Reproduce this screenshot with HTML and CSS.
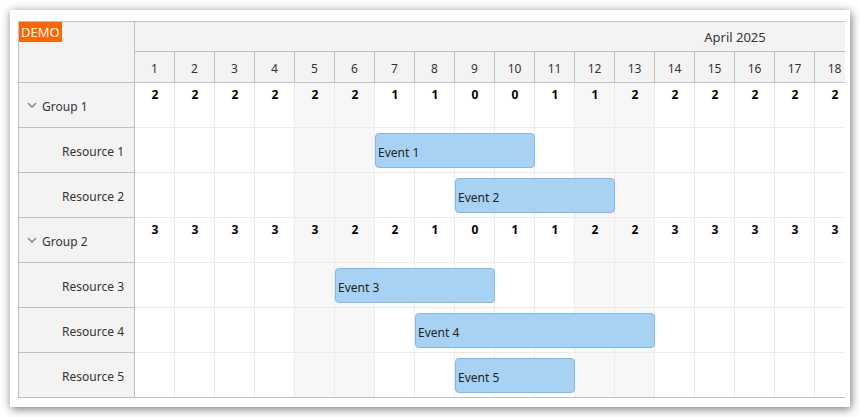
FILE: index.html
```html
<!DOCTYPE html>
<html>
<head>
<meta charset="utf-8">
<link rel="stylesheet" href="styles.css">
</head>
<body>
<div class="card">
  <div class="scheduler">
    <div class="rowheaders">
      <div class="corner"><span class="demo">DEMO</span></div>
      <div class="rh group"><svg class="chev" width="10" height="6" viewBox="0 0 10 6"><path d="M1 1 L5 5 L9 1" fill="none" stroke="#8a8a8a" stroke-width="1.6"/></svg><span>Group 1</span></div>
      <div class="rh res">Resource 1</div>
      <div class="rh res">Resource 2</div>
      <div class="rh group"><svg class="chev" width="10" height="6" viewBox="0 0 10 6"><path d="M1 1 L5 5 L9 1" fill="none" stroke="#8a8a8a" stroke-width="1.6"/></svg><span>Group 2</span></div>
      <div class="rh res">Resource 3</div>
      <div class="rh res">Resource 4</div>
      <div class="rh res">Resource 5</div>
    </div>
    <div class="main">
      <div class="timeheader">
        <div class="month">April 2025</div>
        <div class="days">
          <div>1</div><div>2</div><div>3</div><div>4</div><div>5</div><div>6</div><div>7</div><div>8</div><div>9</div><div>10</div>
          <div>11</div><div>12</div><div>13</div><div>14</div><div>15</div><div>16</div><div>17</div><div>18</div><div>19</div><div>20</div>
          <div>21</div><div>22</div><div>23</div><div>24</div><div>25</div><div>26</div><div>27</div><div>28</div><div>29</div><div>30</div>
        </div>
      </div>
      <div class="rows">
        <div class="row grp">
          <span>2</span><span>2</span><span>2</span><span>2</span><span>2</span><span>2</span><span>1</span><span>1</span><span>0</span><span>0</span>
          <span>1</span><span>1</span><span>2</span><span>2</span><span>2</span><span>2</span><span>2</span><span>2</span><span>2</span><span>2</span>
          <span>2</span><span>2</span><span>2</span><span>2</span><span>2</span><span>2</span><span>2</span><span>2</span><span>2</span><span>2</span>
        </div>
        <div class="row"><div class="event e1">Event 1</div></div>
        <div class="row"><div class="event e2">Event 2</div></div>
        <div class="row grp">
          <span>3</span><span>3</span><span>3</span><span>3</span><span>3</span><span>2</span><span>2</span><span>1</span><span>0</span><span>1</span>
          <span>1</span><span>2</span><span>2</span><span>3</span><span>3</span><span>3</span><span>3</span><span>3</span><span>3</span><span>3</span>
          <span>3</span><span>3</span><span>3</span><span>3</span><span>3</span><span>3</span><span>3</span><span>3</span><span>3</span><span>3</span>
        </div>
        <div class="row"><div class="event e3">Event 3</div></div>
        <div class="row"><div class="event e4">Event 4</div></div>
        <div class="row"><div class="event e5">Event 5</div></div>
      </div>
    </div>
  </div>
</div>
</body>
</html>
```
FILE: styles.css
```css
* { box-sizing: border-box; }
html, body { margin: 0; padding: 0; background: #fff; }
body {
  padding: 10px;
  font-family: "Noto Sans", "Open Sans", sans-serif;
  font-size: 12px;
  color: #333;
}
.card {
  width: 840px;
  height: 397px;
  padding: 11px 5px 9px 8px;
  background: #fff;
  box-shadow: 1px 2px 9px rgba(0,0,0,0.55);
}
.scheduler {
  display: flex;
  width: 827px;
  border: 1px solid #c0c0c0;
  border-right: none;
  overflow: hidden;
}
.rowheaders {
  flex: 0 0 116px;
  width: 116px;
  background: #f3f3f3;
  border-right: 1px solid #c0c0c0;
  display: flex;
  flex-direction: column;
}
.corner {
  height: 61px;
  border-bottom: 1px solid #c0c0c0;
  position: relative;
}
.demo {
  position: absolute;
  left: 0;
  top: 0;
  background: #ff6600;
  color: #fff;
  font-size: 13px;
  line-height: 20px;
  padding: 0 2px;
}
.rh {
  height: 45px;
  border-bottom: 1px solid #c0c0c0;
  display: flex;
  align-items: center;
}
.rh:last-child { border-bottom: none; height: 44px; }
.rh.group { padding-left: 8px; gap: 5px; }
.rh.group span { padding-top: 2px; }
.chev { display: block; }
.rh.res { justify-content: flex-end; padding-right: 10px; padding-top: 2px; }
.main {
  flex: 1;
  min-width: 0;
  overflow: hidden;
}
.timeheader { width: 1200px; background: #f3f3f3; }
.month {
  height: 30px;
  border-bottom: 1px solid #c0c0c0;
  display: flex;
  align-items: center;
  justify-content: center;
  font-size: 13px;
  padding-top: 1px;
}
.days {
  display: grid;
  grid-template-columns: repeat(30, 40px);
  height: 31px;
  border-bottom: 1px solid #c0c0c0;
}
.days div {
  border-right: 1px solid #c0c0c0;
  display: flex;
  align-items: center;
  justify-content: center;
  padding-top: 2px;
}
.rows {
  width: 1200px;
  background-image:
    repeating-linear-gradient(90deg, transparent 0 39px, #ebebeb 39px 40px),
    repeating-linear-gradient(90deg, transparent 0 160px, #f7f7f7 160px 240px, transparent 240px 280px);
}
.row {
  height: 45px;
  border-bottom: 1px solid #ebebeb;
  display: grid;
  grid-template-columns: repeat(30, 40px);
  grid-template-rows: 44px;
}
.row:last-child { border-bottom: none; height: 44px; }
.row.grp span {
  text-align: center;
  font-weight: bold;
  color: #000;
  padding-top: 3px;
}
.event {
  grid-row: 1;
  align-self: start;
  margin-top: 5px;
  height: 35px;
  background: #a8d2f4;
  border: 1px solid #82b9ec;
  border-radius: 4px;
  display: flex;
  align-items: center;
  padding: 3px 0 0 2px;
  color: #222;
}
.e1 { grid-column: 7 / span 4; }
.e2 { grid-column: 9 / span 4; }
.e3 { grid-column: 6 / span 4; }
.e4 { grid-column: 8 / span 6; }
.e5 { grid-column: 9 / span 3; }
```
